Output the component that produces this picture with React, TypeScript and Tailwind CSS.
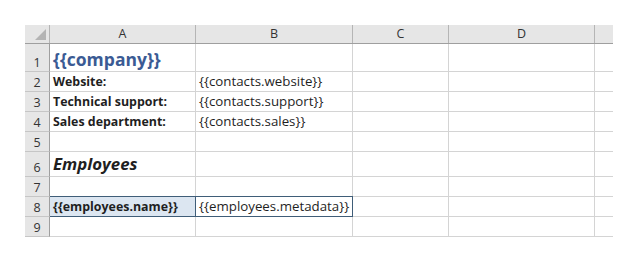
import React from 'react';

const cols = [146, 157, 96, 146, 18];
const letters = ['A', 'B', 'C', 'D', ''];

type Cell = { text?: string; className?: string };

const rows: { h: string; cells: Cell[] }[] = [
  { h: 'h-[28px]', cells: [{ text: '{{company}}', className: 'text-[17.5px] font-bold text-[#3b5b94]' }] },
  { h: 'h-[20px]', cells: [{ text: 'Website:', className: 'font-bold text-[12.4px]' }, { text: '{{contacts.website}}' }] },
  { h: 'h-[20px]', cells: [{ text: 'Technical support:', className: 'font-bold text-[12.4px]' }, { text: '{{contacts.support}}' }] },
  { h: 'h-[20px]', cells: [{ text: 'Sales department:', className: 'font-bold text-[12.4px]' }, { text: '{{contacts.sales}}' }] },
  { h: 'h-[20px]', cells: [] },
  { h: 'h-[25px]', cells: [{ text: 'Employees', className: 'text-[16.8px] font-bold italic' }] },
  { h: 'h-[20px]', cells: [] },
  { h: 'h-[20px]', cells: [] },
  { h: 'h-[20px]', cells: [] },
];

const widthClass = ['w-[146px]', 'w-[157px]', 'w-[96px]', 'w-[146px]', 'w-[18px]'];

export default function App() {
  return (
    <div className="w-[638px] h-[253px] bg-white pt-[25px] pl-[25px] text-[13.3px] text-[#1f1f1f]" style={{ fontFamily: '"Open Sans", "Liberation Sans", sans-serif' }}>
      <div className="flex flex-col w-max">
        {/* column headers */}
        <div className="flex h-[19px] bg-[#e6e6e6] border-b border-[#9f9f9f]">
          <div className="w-[25px] border-r border-[#b5b5b5] relative">
            <div className="absolute right-[3px] bottom-[3px] w-0 h-0 border-l-[11px] border-l-transparent border-b-[11px] border-b-[#b4b4b4]" />
          </div>
          {cols.map((_, i) => (
            <div key={i} className={`${widthClass[i]} ${i < 4 ? 'border-r border-[#b5b5b5]' : ''} flex items-center justify-center text-[12.5px] text-[#333]`}>
              {letters[i]}
            </div>
          ))}
        </div>
        {rows.map((r, ri) => (
          <div key={ri} className={`flex ${r.h}`}>
            <div className="w-[25px] bg-[#e6e6e6] border-r border-b border-r-[#9f9f9f] border-b-[#c6c6c6] flex items-end justify-center pb-[2px] text-[12.5px] leading-none text-[#333]">
              {ri + 1}
            </div>
            {cols.map((_, ci) => {
              const cell = r.cells[ci];
              const selected = ri === 7 && ci < 2;
              let cls = 'border-r border-b border-[#d4d4d4]';
              if (selected && ci === 0) cls = 'bg-[#dce6f1] border-r border-b border-t border-[#3f5d78] -mt-px';
              if (selected && ci === 1) cls = 'border-r border-b border-t border-[#3f5d78] -mt-px';
              if (ci === 4) cls = 'border-b border-[#d4d4d4]';
              return (
                <div key={ci} className={`${widthClass[ci]} ${cls} flex items-end pl-[3px] whitespace-nowrap overflow-visible leading-none`}>
                  {selected && ci === 0 && <span className="font-bold text-[12.4px] pb-[3px]">{'{{employees.name}}'}</span>}
                  {selected && ci === 1 && <span className="pb-[3px]">{'{{employees.metadata}}'}</span>}
                  {cell && cell.text && <span className={`${cell.className ?? ''} pb-[3px]`}>{cell.text}</span>}
                </div>
              );
            })}
          </div>
        ))}
      </div>
    </div>
  );
}
